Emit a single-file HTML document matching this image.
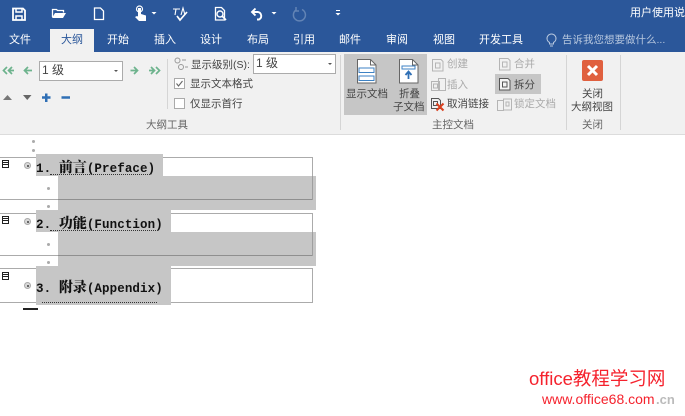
<!DOCTYPE html>
<html><head><meta charset="utf-8"><style>
html,body{margin:0;padding:0}
body{width:685px;height:416px;overflow:hidden;background:#fff;position:relative;font-family:"Liberation Sans","Noto Sans CJK SC",sans-serif;font-size:10.5px;color:#444}
#w{position:absolute;left:0;top:0;width:685px;height:416px;filter:blur(.3px)}
.a{position:absolute}
.t{position:absolute;white-space:nowrap;line-height:14px}
.tab{position:absolute;top:33px;color:#fff;font-size:11px;line-height:14px;white-space:nowrap}
.g{color:#aaa}
.box{position:absolute;border:1px solid #ababab;background:#fff;box-sizing:border-box}
.sel{position:absolute;background:#c6c6c6}
.h{position:absolute;font-family:"Liberation Mono","Noto Serif CJK SC",serif;font-weight:bold;font-size:12.5px;line-height:16px;color:#111;white-space:nowrap;letter-spacing:.1px}
.h b{font-family:"Noto Serif CJK SC",serif;font-size:14px;letter-spacing:0;line-height:16px}
.dot{position:absolute;width:3px;height:3px;border-radius:50%;background:#aaa}
.ol{position:absolute;width:5px;height:5px;border:1px solid #aaa;border-radius:50%;background:#d8d8d8}
.ol:after{content:"";position:absolute;left:1.5px;top:1.5px;width:2px;height:2px;background:#666}
.ic{position:absolute;width:5px;height:6px;border:1.5px solid #222;background:#fff}
.ic:after{content:"";position:absolute;left:0;right:0;top:1px;height:3px;border-top:1px solid #222;border-bottom:1px solid #222;box-sizing:border-box}
svg{position:absolute;overflow:visible}
</style></head><body><div id="w">
<div class="a" style="left:0;top:0;width:685px;height:52px;background:#2b579a"></div>
<div class="a" style="left:50px;top:29px;width:44px;height:23px;background:#f1f1f1"></div>
<div class="a" style="left:0;top:52px;width:685px;height:82px;background:#f1f1f1"></div>
<div class="a" style="left:0;top:134px;width:685px;height:1px;background:#dcdcdc"></div>

<!-- QAT -->
<svg style="left:0;top:0" width="685" height="29" fill="none" stroke="#fff">
<path d="M13 8.500h10l2 2v9.500H13z" stroke-width="1.800"/><path d="M16 8v4h6V8" stroke-width="1.500"/><path d="M16 20v-4h6v4" stroke-width="1.500"/>
<path d="M52.500 17v-7.500h4l1 1h6v2" stroke-width="1.300"/><path d="M52 18l3-5h11l-3 5z" fill="#fff" stroke="none"/>
<path d="M94.500 8h6l3 3v8.500h-9z" stroke-width="1.300"/>
<path d="M138 8h3v6l5 1.500V21h-7l-4-4 2-1 1 .5z" fill="#fff" stroke="none"/><circle cx="139.500" cy="9" r="3" stroke-width="1.200"/>
<path d="M151.500 12h5l-2.500 2.500z" fill="#fff" stroke="none"/>
<path d="M173 9h7M176 9l-1 6M181 15l2-7 2 7" stroke-width="1.100"/><path d="M177 16l3 4 7-8" stroke-width="1.700"/>
<path d="M215.500 7.500h6l3 3v9.500h-9z" stroke-width="1.300"/><circle cx="220" cy="14" r="3" stroke-width="1.400"/><path d="M222 16l4 4" stroke-width="1.700"/>
<path d="M255.500 8.500l-3.500 3.500 3.500 3.500M252 12h6a4 4 0 0 1 1 7.500h-2" stroke-width="1.900"/>
<path d="M271.500 12h5l-2.500 2.500z" fill="#fff" stroke="none"/>
<path d="M302 9.500a6 6 0 1 1-6 .500M296 7v4h3" stroke="#6384b5" stroke-width="1.500"/>
<path d="M336 10.500h4" stroke-width="1"/><path d="M335.500 13h5l-2.500 2.500z" fill="#fff" stroke="none"/>
</svg>
<div class="t" style="left:630px;top:6px;color:#fff;font-size:11px">用户使用说明</div>

<!-- tabs -->
<div class="tab" style="left:9px">文件</div>
<div class="tab" style="left:61px;color:#2b579a">大纲</div>
<div class="tab" style="left:107px">开始</div>
<div class="tab" style="left:154px">插入</div>
<div class="tab" style="left:200px">设计</div>
<div class="tab" style="left:247px">布局</div>
<div class="tab" style="left:293px">引用</div>
<div class="tab" style="left:339px">邮件</div>
<div class="tab" style="left:386px">审阅</div>
<div class="tab" style="left:433px">视图</div>
<div class="tab" style="left:479px">开发工具</div>
<svg style="left:546px;top:34px" width="12" height="14" fill="none" stroke="#b7c7de" stroke-width="1"><path d="M3.500 8.500a4.500 4.500 0 1 1 4 0V10h-4zM4 12h3"/></svg>
<div class="t" style="left:562px;top:33px;color:#b7c7de;font-size:10.500px">告诉我您想要做什么...</div>

<!-- outline tools -->
<svg style="left:0;top:60px" width="170" height="50" fill="none" stroke-width="1.700">
<g stroke="#6db38d"><path d="M7 7l-3.500 3.500L7 14M12 7l-3.500 3.500L12 14M14 10.500H9"/><path d="M28 7l-3.500 3.500L28 14M25 10.500h7"/>
<path d="M134 7l3.500 3.500L134 14M130.500 10.500h6"/><path d="M151 7l3.500 3.500L151 14M156 7l3.500 3.500L156 14M149 10.500h5"/></g>
<path d="M3 40l4.500-5 4.500 5z" fill="#777" stroke="none"/><path d="M23 35h8.500L27.250 40z" fill="#666" stroke="none"/>
<path d="M42 37.500h8.500M46.250 33.500v8.500" stroke="#2f6fb5" stroke-width="2.500"/><path d="M61.500 37.500h8.500" stroke="#2f6fb5" stroke-width="2.500"/>
</svg>
<div class="box" style="left:39px;top:61px;width:84px;height:20px"></div>
<div class="t" style="left:42px;top:63px;font-size:12px;color:#444">1 级</div>
<div class="a" style="left:114px;top:70px;border:2.500px solid transparent;border-top-color:#555"></div>
<div class="a" style="left:167px;top:59px;width:1px;height:50px;background:#d5d5d5"></div>

<svg style="left:174px;top:57px" width="15" height="14" fill="none" stroke="#999"><circle cx="3.500" cy="3.500" r="2.500"/><circle cx="7" cy="10" r="2.500"/><path d="M8 3h4M11 10h3"/></svg>
<div class="t" style="left:191px;top:58px">显示级别(S):</div>
<div class="box" style="left:253px;top:54px;width:83px;height:20px"></div>
<div class="t" style="left:256px;top:56px;font-size:12px">1 级</div>
<div class="a" style="left:328px;top:63px;border:2.500px solid transparent;border-top-color:#555"></div>
<div class="box" style="left:174px;top:78px;width:11px;height:11px;border-color:#aaa"></div>
<svg style="left:174px;top:78px" width="11" height="11" fill="none" stroke="#666" stroke-width="1.100"><path d="M2.500 5.500l2 2.500 4-5"/></svg>
<div class="t" style="left:190px;top:77px">显示文本格式</div>
<div class="box" style="left:174px;top:98px;width:11px;height:11px;border-color:#aaa"></div>
<div class="t" style="left:190px;top:97px">仅显示首行</div>
<div class="t" style="left:146px;top:118px;color:#666">大纲工具</div>
<div class="a" style="left:340px;top:55px;width:1px;height:75px;background:#d5d5d5"></div>

<!-- master -->
<div class="a" style="left:344px;top:54px;width:83px;height:61px;background:#c6c6c6"></div>
<svg style="left:344px;top:54px" width="90" height="32" fill="#fff" stroke="#666"><path d="M13.500 5.500h13l5.500 5.500v18H13.500z"/><path d="M26.500 5.500v5.500h5.500" fill="none"/>
<g fill="none" stroke="#3d82c4"><rect x="15" y="14" width="15" height="4.500"/><rect x="15" y="22" width="15" height="4.500"/></g>
<path d="M55.500 5.500h13l5.500 5.500v18H55.500z"/><path d="M68.500 5.500v5.500h5.500" fill="none"/>
<rect x="58" y="12" width="13" height="3" fill="none" stroke="#3d82c4"/><path d="M64.500 25v-6M61.500 21l3-3.500 3 3.500" fill="none" stroke="#2f6fb5" stroke-width="1.800"/></svg>
<div class="t" style="left:346px;top:87px">显示文档</div>
<div class="t" style="left:399px;top:87px">折叠</div>
<div class="t" style="left:393px;top:100px">子文档</div>

<svg style="left:430px;top:56px" width="140" height="66" fill="none" stroke="#b5b5b5">
<path d="M2.500 3.500h8.500l2 2v9.500H2.500zM5.500 7h4.500v5H5.500z"/>
<path d="M8.500 22.500h7v12h-7zM1.500 25.500h8v9h-8z"/><path d="M3.500 28h4v4h-4z"/>
<path d="M1.500 42.500h7l2 2v8h-9z" stroke="#555"/><path d="M3.500 45.500h4v4h-4z" stroke="#555"/><path d="M6.500 47.500l7 7M13.500 47.500l-7 7" stroke="#d9401f" stroke-width="2.100"/>
<path d="M69.500 2.500h8.500l2 2v9.500H69.500zM72.500 6h4.500v5h-4.500z"/>
<path d="M73.500 43h8v11h-8zM76 46h3v4h-3z"/><path d="M67.500 44.500h6v10h-6z"/>
</svg>
<div class="t g" style="left:447px;top:57px">创建</div>
<div class="t g" style="left:447px;top:78px">插入</div>
<div class="t" style="left:447px;top:97px">取消链接</div>
<div class="a" style="left:495px;top:74px;width:46px;height:20px;background:#c6c6c6"></div>
<svg style="left:499px;top:78px" width="12" height="13" fill="#f4f4f4" stroke="#555"><path d="M.500.500h8.500l2 2v9.500H.500z"/><path d="M3.500 4h4.500v5H3.500z" fill="none"/></svg>
<div class="t g" style="left:514px;top:57px">合并</div>
<div class="t" style="left:514px;top:78px">拆分</div>
<div class="t g" style="left:514px;top:97px">锁定文档</div>
<div class="t" style="left:432px;top:118px;color:#666">主控文档</div>
<div class="a" style="left:566px;top:55px;width:1px;height:75px;background:#d5d5d5"></div>

<!-- close -->
<div class="a" style="left:582px;top:60px;width:21px;height:21px;background:#e0603f;border-radius:2px"></div>
<svg style="left:582px;top:60px" width="21" height="21" fill="none" stroke="#fff" stroke-width="3"><path d="M6 6l9 9M15 6l-9 9"/></svg>
<div class="t" style="left:582px;top:87px">关闭</div>
<div class="t" style="left:571px;top:100px">大纲视图</div>
<div class="t" style="left:582px;top:118px;color:#666">关闭</div>
<div class="a" style="left:620px;top:55px;width:1px;height:75px;background:#d5d5d5"></div>

<!-- doc -->
<div class="box" style="left:-3px;top:157px;width:316px;height:43px"></div>
<div class="box" style="left:-3px;top:213px;width:316px;height:43px"></div>
<div class="box" style="left:-3px;top:268px;width:316px;height:35px"></div>

<div class="sel" style="left:36px;top:154px;width:127px;height:22px"></div>
<div class="sel" style="left:58px;top:176px;width:258px;height:34px"></div>
<div class="a" style="left:58px;top:199px;width:255px;height:1px;background:#8f8f8f"></div>
<div class="a" style="left:312px;top:176px;width:1px;height:24px;background:#9f9f9f"></div>
<div class="sel" style="left:36px;top:210px;width:135px;height:22px"></div>
<div class="sel" style="left:58px;top:232px;width:258px;height:34px"></div>
<div class="a" style="left:58px;top:255px;width:255px;height:1px;background:#8f8f8f"></div>
<div class="a" style="left:312px;top:232px;width:1px;height:24px;background:#9f9f9f"></div>
<div class="sel" style="left:36px;top:266px;width:135px;height:39px"></div>

<div class="dot" style="left:32px;top:140px"></div>
<div class="dot" style="left:32px;top:149px"></div>
<div class="dot" style="left:47px;top:187px"></div>
<div class="dot" style="left:47px;top:205px"></div>
<div class="dot" style="left:47px;top:243px"></div>
<div class="dot" style="left:47px;top:261px"></div>

<div class="ic" style="left:2px;top:160px"></div>
<div class="ic" style="left:2px;top:216px"></div>
<div class="ic" style="left:2px;top:272px"></div>
<div class="ol" style="left:24px;top:162px"></div>
<div class="ol" style="left:24px;top:218px"></div>
<div class="ol" style="left:24px;top:282px"></div>

<div class="h" style="left:36px;top:159px">1.&nbsp;<b>前言</b>(Preface)</div>
<div class="h" style="left:36px;top:215px">2.&nbsp;<b>功能</b>(Function)</div>
<div class="h" style="left:36px;top:279px">3.&nbsp;<b>附录</b>(Appendix)</div>
<div class="a" style="left:50px;top:173px;width:100px;height:1px;border-bottom:1px dotted #333"></div>
<div class="a" style="left:50px;top:229px;width:108px;height:1px;border-bottom:1px dotted #333"></div>
<div class="a" style="left:42px;top:301px;width:115px;height:1px;border-bottom:1px dotted #333"></div>
<div class="a" style="left:23px;top:308px;width:15px;height:2px;background:#222"></div>

<!-- watermark -->
<div class="t" style="left:529px;top:368px;color:#f5222d;font-size:18.500px;line-height:22px">office教程学习网</div>
<div class="t" style="left:542px;top:391px;color:#f5222d;font-size:14px;line-height:16px">www.office68.com</div>
<div class="t" style="left:656px;top:392px;color:#bbb;font-size:13px;line-height:16px;font-weight:bold">.cn</div>
</div></body></html>
